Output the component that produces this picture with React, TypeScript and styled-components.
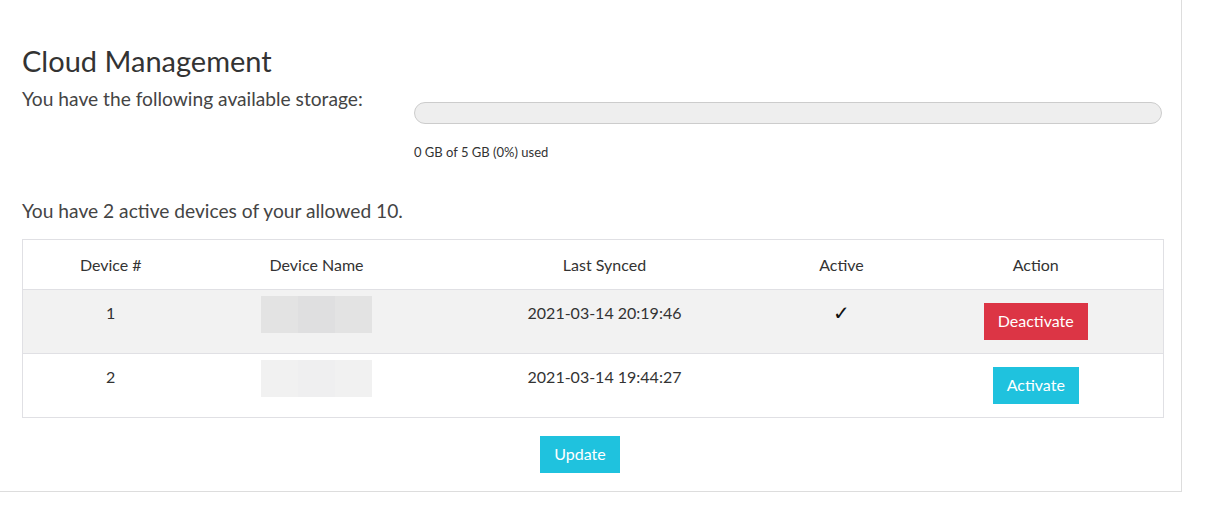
import React from "react";
import styled, { createGlobalStyle } from "styled-components";

const GlobalStyle = createGlobalStyle`
    html, body {
        margin: 0;
        padding: 0;
        background: #fff;
        font-family: Lato, "Open Sans", sans-serif;
        color: #333;
    }
`

const Page = styled.div`
    width: 1207px;
    height: 521px;
    background: #fff;
`
const Panel = styled.div`
    width: 1182px;
    box-sizing: border-box;
    border-right: 1px solid #ddd;
    border-bottom: 1px solid #ddd;
    padding: 43px 19px 18px 22px;
`
const Title = styled.h2`
    margin: 0;
    font-size: 29px;
    font-weight: 400;
    line-height: 36px;
    color: #333;
`
const StorageRow = styled.div`
    display: flex;
    margin-top: 8px;
`
const Label = styled.p`
    margin: 0;
    width: 392px;
    font-size: 19.2px;
    line-height: 24px;
    color: #444;
`
const StorageCol = styled.div`
    flex: 1;
    padding-top: 15px;
`
const Progress = styled.div`
    height: 20px;
    border: 1px solid #ccc;
    border-radius: 11px;
    background: #eee;
    overflow: hidden;
`
const Fill = styled.div`
    height: 100%;
    background: #1fc2de;
`
const Usage = styled.div`
    margin-top: 20px;
    font-size: 13px;
    line-height: 16px;
    color: #333;
`
const DevicesText = styled.p`
    margin: 39px 0 0;
    font-size: 19.2px;
    line-height: 24px;
    color: #444;
`
const Table = styled.table`
    margin-top: 16px;
    width: 1141px;
    table-layout: fixed;
    border-collapse: collapse;
    border: 1px solid #e0e0e4;
    font-size: 16px;
    color: #333;
`
const Th = styled.th<{ $w: number }>`
    box-sizing: border-box;
    width: ${p => p.$w}px;
    font-weight: 400;
    text-align: center;
    padding: 14px 8px 13px;
    line-height: 22px;
    border-bottom: 1px solid #e0e0e4;
`
const Tr = styled.tr<{ $shade?: boolean }>`
    background: ${p => (p.$shade ? "#f2f2f2" : "#fff")};
    border-bottom: 1px solid #e0e0e4;
`
const Td = styled.td`
    text-align: center;
    vertical-align: top;
    padding: 12px 8px;
    line-height: 22px;
    height: 39px;
`
const Check = styled.span`
    font-family: "DejaVu Sans", sans-serif;
    font-size: 20px;
    color: #111;
`
const Blur = styled.div<{ $light?: boolean }>`
    display: flex;
    width: 111px;
    height: 37px;
    margin: -6px auto 0;
    div {
        flex: 1;
        background: ${p => (p.$light ? "#f1f1f1" : "#e3e3e3")};
    }
    div:nth-child(2) {
        background: ${p => (p.$light ? "#efeff0" : "#dfdfe0")};
    }
`
const Button = styled.button<{ $variant: "danger" | "info" }>`
    display: inline-block;
    border: none;
    border-radius: 0;
    font-family: inherit;
    font-size: 16px;
    line-height: 22px;
    padding: 7px 14px 8px;
    color: #fff;
    cursor: pointer;
    margin-top: 1px;
    background: ${p => (p.$variant === "danger" ? "#dc3545" : "#1fc2de")};
`
const Footer = styled.div`
    display: flex;
    justify-content: center;
    padding: 17px 25px 0 0;
    width: 1141px;
    box-sizing: border-box;
`

const devices = [
    { id: 1, synced: "2021-03-14 20:19:46", active: true },
    { id: 2, synced: "2021-03-14 19:44:27", active: false },
]

export default function App() {
    const used = 0
    const total = 5
    return (
        <Page>
            <GlobalStyle />
            <Panel>
                <Title>Cloud Management</Title>
                <StorageRow>
                    <Label>You have the following available storage:</Label>
                    <StorageCol>
                        <Progress>
                            <Fill style={{ width: `${(used / total) * 100}%` }} />
                        </Progress>
                        <Usage>0 GB of 5 GB (0%) used</Usage>
                    </StorageCol>
                </StorageRow>
                <DevicesText>You have 2 active devices of your allowed 10.</DevicesText>
                <Table>
                    <thead>
                        <tr>
                            <Th $w={176}>Device #</Th>
                            <Th $w={236}>Device Name</Th>
                            <Th $w={340}>Last Synced</Th>
                            <Th $w={134}>Active</Th>
                            <Th $w={255}>Action</Th>
                        </tr>
                    </thead>
                    <tbody>
                        {devices.map((d, i) => (
                            <Tr key={d.id} $shade={i === 0}>
                                <Td>{d.id}</Td>
                                <Td>
                                    <Blur $light={i !== 0}><div /><div /><div /></Blur>
                                </Td>
                                <Td>{d.synced}</Td>
                                <Td>{d.active ? <Check>✓</Check> : ""}</Td>
                                <Td>
                                    {d.active
                                        ? <Button $variant="danger">Deactivate</Button>
                                        : <Button $variant="info">Activate</Button>}
                                </Td>
                            </Tr>
                        ))}
                    </tbody>
                </Table>
                <Footer>
                    <Button $variant="info">Update</Button>
                </Footer>
            </Panel>
        </Page>
    )
}
